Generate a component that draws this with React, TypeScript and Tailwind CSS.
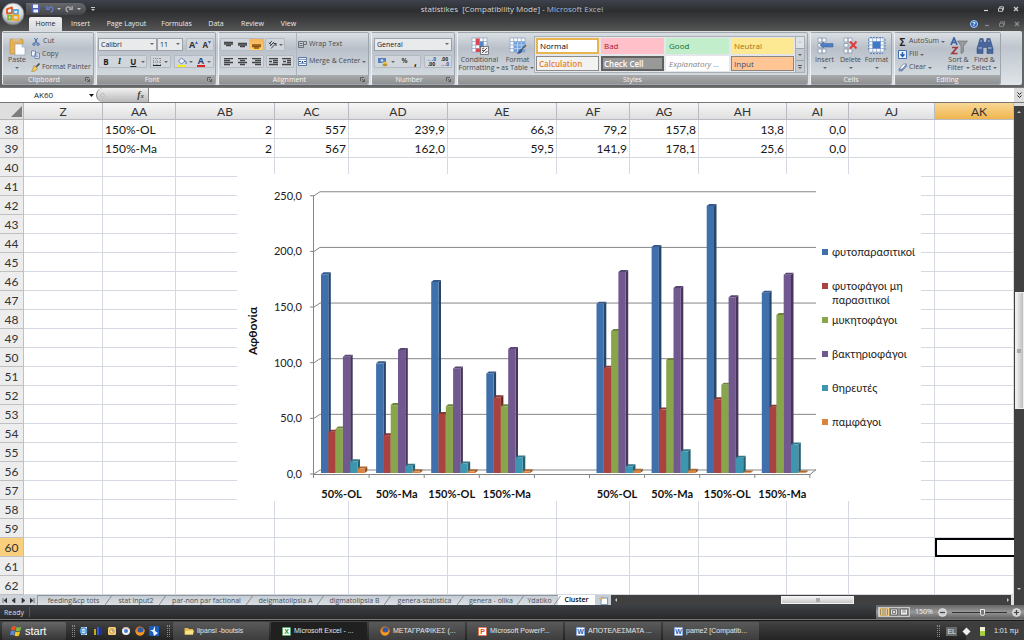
import type { ReactNode } from "react";
import clsx from "clsx";

/* ---------- data ---------- */

const columns = [
  { name: "Z", width: "w-[79px]" },
  { name: "AA", width: "w-[73px]" },
  { name: "AB", width: "w-[99px]" },
  { name: "AC", width: "w-[74px]" },
  { name: "AD", width: "w-[99px]" },
  { name: "AE", width: "w-[109px]" },
  { name: "AF", width: "w-[73px]" },
  { name: "AG", width: "w-[69px]" },
  { name: "AH", width: "w-[88px]" },
  { name: "AI", width: "w-[62px]" },
  { name: "AJ", width: "w-[86px]" },
  { name: "AK", width: "" },
];

const cells: Record<number, Record<string, string>> = {
  38: { AA: "150%-OL", AB: "2", AC: "557", AD: "239,9", AE: "66,3", AF: "79,2", AG: "157,8", AH: "13,8", AI: "0,0" },
  39: { AA: "150%-Ma", AB: "2", AC: "567", AD: "162,0", AE: "59,5", AF: "141,9", AG: "178,1", AH: "25,6", AI: "0,0" },
};

const rows = Array.from({ length: 25 }, (_, i) => 38 + i);

const series = [
  { front: "#4070ab", side: "#27466c", top: "#35598a", label: ["φυτοπαρασιτικοί"] },
  { front: "#aa4340", side: "#6d2927", top: "#873533", label: ["φυτοφάγοι μη", "παρασιτικοί"] },
  { front: "#88a54c", side: "#566a2e", top: "#6c843b", label: ["μυκητοφάγοι"] },
  { front: "#71588f", side: "#46365b", top: "#594572", label: ["βακτηριοφάγοι"] },
  { front: "#3d96af", side: "#255f70", top: "#30788c", label: ["θηρευτές"] },
  { front: "#db843d", side: "#8d5325", top: "#b0692f", label: ["παμφάγοι"] },
];

const groups = [
  { name: "50%-OL", values: [178.5, 37, 40, 104.5, 10.5, 4] },
  { name: "50%-Ma", values: [98.5, 34, 61, 110.5, 6.5, 1.5] },
  { name: "150%-OL", values: [171.5, 53, 60, 94, 8.5, 1.5] },
  { name: "150%-Ma", values: [89.5, 68, 60, 111.5, 14, 1.5] },
  { name: "", values: [] },
  { name: "50%-OL", values: [152, 94.5, 127.5, 180.5, 6, 2] },
  { name: "50%-Ma", values: [203, 57, 101.5, 166.3, 19.5, 2] },
  { name: "150%-OL", values: [239.9, 66.3, 79.2, 157.8, 13.8, 0.5] },
  { name: "150%-Ma", values: [162, 59.5, 141.9, 178.1, 25.6, 0.5] },
];

const sheets = [
  { name: "feeding&cp tots", width: "w-[71px]" },
  { name: "stat input2", width: "w-[54px]" },
  { name: "par-non par factional", width: "w-[87px]" },
  { name: "deigmatolipsia A", width: "w-[71px]" },
  { name: "digmatolipsia B", width: "w-[67px]" },
  { name: "genera-statistica", width: "w-[73px]" },
  { name: "genera - olika", width: "w-[60px]" },
  { name: "Ydatiko", width: "w-[37px]" },
];

/* ---------- small pieces ---------- */

function Caret({ light }: { light?: boolean }) {
  return (
    <svg className="h-[2px] w-[4px] shrink-0" viewBox="0 0 4 2">
      <path d="M0 0h4L2 2z" fill={light ? "#c8c8c8" : "#666"} />
    </svg>
  );
}

function Group({ title, width, launcher, children }: { title: string; width: string; launcher?: boolean; children: ReactNode }) {
  return (
    <section className={clsx("flex shrink-0 flex-col overflow-hidden rounded-[2px] border border-[#9fa5ac] border-l-[#eef1f3] bg-linear-to-b from-[#dadfe3] via-[#b9c0c9] via-30% to-[#dbe2e6]", width)}>
      <div className="flex h-[42px]">{children}</div>
      <h2 className="flex h-[9px] items-center bg-linear-to-b from-[#a9aaac] to-[#8f9092] text-[7px] leading-[9px] text-[#f6f6f6]">
        <span className="flex-1 text-center">{title}</span>
        {launcher && (
          <button aria-label={`${title} options`} className="mr-[3px]">
            <svg className="size-[5px]" viewBox="0 0 5 5" fill="none" stroke="#4e4e4e">
              <path d="M.5 4V.5H4M2 2l2.5 2.5M4.5 2v2.5H2" strokeWidth=".8" />
            </svg>
          </button>
        )}
      </h2>
    </section>
  );
}

function Box({ children, className }: { children: ReactNode; className?: string }) {
  return <div className={clsx("flex h-[13px] items-center justify-around rounded-[1px] border border-[#b3bac1] bg-[#d0d6dc]", className)}>{children}</div>;
}

function Pick({ label, value, width }: { label: string; value: string; width: string }) {
  return (
    <div className={clsx("relative h-[13px] border border-[#9ba2a9] bg-[#e8eaec]", width)}>
      <select aria-label={label} className="block h-full w-full appearance-none bg-transparent pl-[2px] text-[7px] leading-[11px] text-[#222] outline-none">
        <option>{value}</option>
      </select>
      <span className="pointer-events-none absolute top-[4px] right-[2px] flex"><Caret /></span>
    </div>
  );
}

function Lines({ rows, label, on }: { rows: number[][]; label: string; on?: boolean }) {
  return (
    <button aria-label={label} className={clsx("flex h-full w-[14px] items-center justify-center", on && "bg-linear-to-b from-[#f6b35b] to-[#ffd166]")}>
      <svg className="h-[8px] w-[9px]" viewBox="0 0 9 8" stroke={on ? "#8a5212" : "#444"}>
        {rows.map(([y, a, b], i) => (
          <path key={i} d={`M${a} ${y}H${b}`} strokeWidth="1.3" />
        ))}
      </svg>
    </button>
  );
}

function BigButton({ icon, lines, width, caret }: { icon: ReactNode; lines: string[]; width: string; caret?: boolean }) {
  return (
    <button className={clsx("flex shrink-0 flex-col items-center pt-[3px] text-[7px] leading-[8px] whitespace-nowrap text-[#4a4a4a]", width)}>
      <span className="flex h-[20px] items-center">{icon}</span>
      {lines.map((line, i) => (
        <span key={line} className="flex items-center gap-[2px]">
          {line}
          {!caret && i === lines.length - 1 && <Caret />}
        </span>
      ))}
      {caret && <span className="mt-[3px]"><Caret /></span>}
    </button>
  );
}

function TableIcon({ kind }: { kind: "cond" | "format" | "insert" | "delete" | "size" }) {
  const full = kind === "cond" || kind === "format" || kind === "size";
  return (
    <svg className="size-[18px]" viewBox="0 0 18 18">
      {full ? (
        <>
          <rect x="1" y="1" width="15" height="14" fill="#f7f9fc" stroke="#8aa0c0" strokeWidth=".7" />
          <path d="M1 4.500h15M1 8h15M1 11.500h15M4.700 1v14M8.500 1v14M12.300 1v14" stroke="#8aa0c0" strokeWidth=".7" />
        </>
      ) : (
        <path d="M2 1h4v4H2zM6 1h4v4H6zM2 6.500h4v3.500H2zM2 12h4v4H2zM6 12h4v4H6z" fill="#f7f9fc" stroke="#7d8fa9" strokeWidth=".7" />
      )}
      {kind === "cond" && (
        <>
          <path d="M5 1.500h3.500V8H5zM5 11.500h5V15H5z" fill="#dc4652" />
          <path d="M8.500 4.500h4V11h-4z" fill="#5284cc" />
          <rect x="9.500" y="9.500" width="8" height="8" fill="#eee" stroke="#555" strokeWidth=".7" />
          <path d="M11 12l2-1M11 13.500h3M14 15.500l2.500-1M11 16l5-5" stroke="#333" strokeWidth=".8" />
        </>
      )}
      {kind === "format" && (
        <>
          <path d="M5 4.800h11V15H5z" fill="#75a3de" />
          <path d="M5 8h11M5 11.500h11M8.500 5v10M12.300 5v10" stroke="#c9dcf3" strokeWidth=".7" />
          <path d="M17 8l-5 5" stroke="#61584f" strokeWidth="1.500" />
          <path d="M11.500 12l2 1.500c-1 3-3 3.500-6 3 2-1 2-3 4-4.500z" fill="#41597f" />
        </>
      )}
      {kind === "insert" && <path d="M4 8l3.500-3v1.500H17v3.500H7.500V11z" fill="#4f7ec4" stroke="#345d9c" strokeWidth=".5" />}
      {kind === "delete" && <path d="M8 4.500l6.500 7M14.500 4.500l-6.500 7" stroke="#df3d3b" strokeWidth="2" />}
      {kind === "size" && (
        <>
          <rect x="4.700" y="4.500" width="7.800" height="7" fill="#3f78c9" />
          <path d="M2 .5h13M2 16.500h13M.3 2v12M17 2v12" stroke="#5d86c0" strokeWidth="1" strokeDasharray="2 1" />
        </>
      )}
    </svg>
  );
}

/* ---------- window chrome ---------- */

function WindowButtons({ dim }: { dim?: boolean }) {
  return (
    <div className={clsx("flex gap-[9px]", dim ? "text-[#8b8b8b]" : "text-[#d0d0d0]")}>
      <button aria-label="Minimize">
        <svg className="size-[6px]" viewBox="0 0 6 6"><path d="M1 4.500h4" stroke="currentColor" strokeWidth="1.200" /></svg>
      </button>
      <button aria-label="Restore">
        <svg className="size-[6px]" viewBox="0 0 6 6" fill="none" stroke="currentColor"><path d="M1.700 2V.8H5.500v3H4.500M.5 2.300h4v3h-4z" strokeWidth=".9" /></svg>
      </button>
      <button aria-label="Close">
        <svg className="size-[6px]" viewBox="0 0 6 6" stroke="currentColor"><path d="M1 1l4 4M5 1L1 5" strokeWidth="1.300" /></svg>
      </button>
    </div>
  );
}

function TitleBar() {
  return (
    <header className="relative bg-linear-to-b from-[#3e424d] via-[#2d2e30] via-35% to-[#555555] font-['Open_Sans','Noto_Sans',sans-serif]">
      <button aria-label="Office Button" className="absolute top-[2px] left-[1px] z-10">
        <svg className="size-[24px]" viewBox="0 0 24 24">
          <defs>
            <radialGradient id="orb" cx=".5" cy=".3" r=".75">
              <stop offset="0" stopColor="#fff" />
              <stop offset=".6" stopColor="#d6d8db" />
              <stop offset="1" stopColor="#6e7378" />
            </radialGradient>
          </defs>
          <circle cx="12" cy="12" r="11" fill="url(#orb)" stroke="#6d7073" strokeWidth=".7" />
          <g fill="none" strokeWidth="1.900" strokeLinejoin="round">
            <path d="M6 7.200l5-1.800v5.500l-5 .7z" stroke="#e35b27" />
            <path d="M12.500 8h4.500v4h-4.500z" stroke="#5ea8d8" />
            <path d="M7 13.500h3.500v3.800H7z" stroke="#86b83c" />
            <path d="M12 13.300h5.500v4.500H12z" stroke="#f0aa26" />
          </g>
        </svg>
      </button>
      <div className="grid h-[17px] grid-cols-[1fr_auto_1fr] items-center">
        <div className="flex items-center gap-[5px]">
          <div className="ml-[26px] flex h-[12px] w-[60px] items-center gap-[4px] rounded-r-full bg-linear-to-b from-[#68696d] to-[#444548] pl-[5px]">
            <button aria-label="Save">
              <svg className="size-[9px]" viewBox="0 0 9 9">
                <path d="M.5.5h7l1 1v7h-8z" fill="#5262b8" />
                <path d="M2 .5h5v3.500H2zM2.500 5.500H7v3H2.500z" fill="#eef1fc" />
              </svg>
            </button>
            <button aria-label="Undo" className="ml-[2px] flex items-center gap-[3px]">
              <svg className="size-[8px]" viewBox="0 0 8 8" fill="none" stroke="#6278c0" strokeWidth="1.600"><path d="M2 3.500c2-2.500 5-1.500 5 .5S5.500 6.500 5 7.500" /><path d="M.8 1v3.200H4" /></svg>
              <Caret light />
            </button>
            <button aria-label="Redo" className="flex items-center gap-[4px]">
              <svg className="size-[8px]" viewBox="0 0 8 8" fill="none" stroke="#a3a5a9" strokeWidth="1.500"><path d="M6 3.500C4 1 1 2 1 4s1 2.500 2 3" /><path d="M7.200 1v3.200H4" /></svg>
              <Caret light />
            </button>
          </div>
          <button aria-label="Customize toolbar" className="border-t border-[#c8c8c8] pt-[1px]"><Caret light /></button>
        </div>
        <h1 className="text-[8px] whitespace-pre text-[#d6d6d6]">
          statistikes  [Compatibility Mode] - <span className="text-[#a6bdd8]">Microsoft Excel</span>
        </h1>
        <div className="flex justify-end pr-[5px]"><WindowButtons /></div>
      </div>
      <nav className="flex h-[14px] items-end pl-[29px] text-[7px] font-medium text-[#ececec]">
        <button className="h-[14px] w-[33px] rounded-t-[2px] bg-linear-to-b from-[#eeeeee] to-[#d5dade] text-[#222]">Home</button>
        <button className="h-[14px] w-[37px]">Insert</button>
        <button className="h-[14px] w-[55px]">Page Layout</button>
        <button className="h-[14px] w-[45px]">Formulas</button>
        <button className="h-[14px] w-[34px]">Data</button>
        <button className="h-[14px] w-[39px]">Review</button>
        <button className="h-[14px] w-[33px]">View</button>
        <div className="ml-auto flex items-center gap-[6px] self-center pr-[4px]">
          <button aria-label="Help" className="flex size-[8px] items-center justify-center rounded-full border border-[#a9cdf5] bg-[#2467be] text-[6px] leading-[6px] font-bold text-white">?</button>
          <WindowButtons dim />
        </div>
      </nav>
    </header>
  );
}

const smallButton = "flex h-[13px] items-center gap-[2px] whitespace-nowrap";

function Ribbon() {
  return (
    <div className="h-[56px] bg-[#626466] px-[2px] pb-[2px] font-['Open_Sans','Noto_Sans',sans-serif] text-[7px] text-[#4a4a4a]">
      <div className="flex h-full gap-[2px] overflow-hidden rounded-[2px] bg-linear-to-b from-[#dce0e4] via-[#bfc6ce] via-30% to-[#dfe5e8] pt-px">
        <Group title="Clipboard" width="w-[92px]" launcher>
          <BigButton
            width="w-[28px]"
            lines={["Paste"]}
            caret
            icon={
              <svg className="h-[19px] w-[17px]" viewBox="0 0 17 19">
                <rect x="1" y="2" width="13" height="15" rx="1" fill="#e6b155" stroke="#b98a3c" strokeWidth=".6" />
                <path d="M4 1h7v3H4z" fill="#c9c1ae" />
                <path d="M6 7h7l3 3v8H6z" fill="#fbfcfe" stroke="#8b97ad" strokeWidth=".6" />
                <path d="M13 7v3h3" fill="#d5dbea" stroke="#8b97ad" strokeWidth=".6" />
              </svg>
            }
          />
          <div className="flex flex-col pt-[2px]">
            <button className={smallButton}>
              <svg className="mx-[1px] size-[8px]" viewBox="0 0 8 8" fill="none" stroke="#4067ae"><path d="M5.500 0L3 5M2.500 0L5 5" /><circle cx="2" cy="6.200" r="1.200" /><circle cx="6" cy="6.200" r="1.200" /></svg>
              Cut
            </button>
            <button className={smallButton}>
              <svg className="size-[9px]" viewBox="0 0 9 9" fill="#f3f6fc" stroke="#5878b4" strokeWidth=".8"><path d="M.5 1h4v5h-4zM4 3h4.500v5.500H4z" /><path d="M5 5h2.500M5 6.700h2.500" /></svg>
              Copy
            </button>
            <button className={smallButton}>
              <svg className="size-[9px]" viewBox="0 0 9 9"><path d="M8.500.5L5 4" stroke="#454d5c" strokeWidth="1.600" /><path d="M3 2.500l3.500 3C5 8 3 8.500.5 8.500 2 7 2 4 3 2.500z" fill="#f0cd58" stroke="#96752a" strokeWidth=".5" /></svg>
              Format Painter
            </button>
          </div>
        </Group>

        <Group title="Font" width="w-[120px]" launcher>
          <div className="flex flex-1 flex-col gap-[4px] pt-[5px] pl-[1px]">
            <div className="flex">
              <Pick label="Font name" value="Calibri" width="w-[59px]" />
              <Pick label="Font size" value="11" width="w-[26px]" />
              <Box className="ml-[3px] w-[28px] font-['Open_Sans',sans-serif] font-bold text-[#333]">
                <button aria-label="Grow font" className="flex items-center text-[9px] leading-[11px]">A<svg className="mb-[5px] size-[3px]" viewBox="0 0 3 3"><path d="M0 3h3L1.500 0z" fill="#3465ad" /></svg></button>
                <button aria-label="Shrink font" className="flex items-center text-[8px] leading-[11px]">A<svg className="mb-[5px] size-[3px]" viewBox="0 0 3 3"><path d="M0 0h3L1.500 3z" fill="#3465ad" /></svg></button>
              </Box>
            </div>
            <div className="flex gap-[3px]">
              <Box className="w-[49px] text-[8px] leading-[10px] text-[#222]">
                <button className="w-[12px] font-bold">B</button>
                <button className="w-[12px] font-['Liberation_Serif',serif] font-bold italic">I</button>
                <button className="w-[12px] font-bold underline">U</button>
                <Caret />
              </Box>
              <Box className="w-[21px]">
                <button aria-label="Borders" className="flex items-center gap-[3px]">
                  <svg className="size-[8px]" viewBox="0 0 8 8" stroke="#888" fill="none"><path d="M.5 0v7M4 0v7M7.500 0v7M0 .5h8M0 4h8" strokeDasharray="1 1" /><path d="M0 7.500h8" stroke="#222" /></svg>
                  <Caret />
                </button>
              </Box>
              <Box className="w-[40px]">
                <button aria-label="Fill color" className="flex items-center gap-[2px]">
                  <svg className="size-[10px]" viewBox="0 0 10 10"><path d="M1.500 4l3-3 3.500 3-3.500 3z" fill="#edf2f9" stroke="#466caa" strokeWidth=".8" /><path d="M8 3.500c1 1 1.500 2 1 3.500" stroke="#4171be" fill="none" /><path d="M1 8h8v2H1z" fill="#f7ec12" /></svg>
                  <Caret />
                </button>
                <button aria-label="Font color" className="flex items-center gap-[2px]">
                  <span className="border-b-2 border-[#e3221d] px-[1px] text-[9px] leading-[8px] font-bold text-[#2d4379]">A</span>
                  <Caret />
                </button>
              </Box>
            </div>
          </div>
        </Group>

        <Group title="Alignment" width="w-[151px]" launcher>
          <div className="flex shrink-0 flex-col gap-[4px] border-r border-[#aeb4bb] pt-[5px] pr-[2px] pl-[1px]">
            <div className="flex gap-[1px]">
              <Box className="w-[44px]">
                <Lines label="Top align" rows={[[1.5, 0, 9], [3, 0, 9], [4.5, 2, 7]]} />
                <Lines label="Middle align" rows={[[2.5, 0, 9], [4, 0, 9], [5.5, 2, 7]]} />
                <Lines label="Bottom align" on rows={[[4, 0, 9], [5.5, 0, 9], [7, 2, 7]]} />
              </Box>
              <Box className="w-[20px]">
                <button aria-label="Orientation" className="flex items-center gap-[2px]">
                  <svg className="size-[9px]" viewBox="0 0 9 9" fill="none" stroke="#333"><path d="M1 4l3-3M2 6l4-4M1 2.500l3 3M3 8.500l5-5M8 6V3.500H5.500" strokeWidth=".9" /></svg>
                  <Caret />
                </button>
              </Box>
            </div>
            <div className="flex gap-[2px]">
              <Box className="w-[44px]">
                <Lines label="Align left" rows={[[0.5, 0, 9], [2.5, 0, 6], [4.5, 0, 9], [6.5, 0, 6]]} />
                <Lines label="Center" rows={[[0.5, 0, 9], [2.5, 2, 7], [4.5, 0, 9], [6.5, 2, 7]]} />
                <Lines label="Align right" rows={[[0.5, 0, 9], [2.5, 3, 9], [4.5, 0, 9], [6.5, 3, 9]]} />
              </Box>
              <Box className="w-[28px]">
                <Lines label="Decrease indent" rows={[[0.5, 0, 9], [2.5, 4, 9], [3.5, 0, 3], [4.5, 4, 9], [6.5, 0, 9]]} />
                <Lines label="Increase indent" rows={[[0.5, 0, 9], [2.5, 5, 9], [3.5, 1, 4], [4.5, 5, 9], [6.5, 0, 9]]} />
              </Box>
            </div>
          </div>
          <div className="flex flex-col gap-[4px] pt-[5px] pl-[1px]">
            <button className={smallButton}>
              <svg className="size-[9px]" viewBox="0 0 9 9" fill="none" stroke="#6b6f76"><path d="M.5 1.500h5v6h-5zM1.500 3.500h3M1.500 5.500h3M6 1.500h2.500v3H6" /></svg>
              Wrap Text
            </button>
            <button className={smallButton}>
              <svg className="size-[9px]" viewBox="0 0 9 9"><path d="M.5.5h8v8h-8z" fill="#eaf0f8" stroke="#5b77a4" /><path d="M.5 2.500h8v4h-8z" fill="#fff" stroke="#5b77a4" strokeWidth=".7" /><path d="M1 4.500h2M6 4.500h2M4 6l.5-2 .5 2" stroke="#224f94" fill="none" /></svg>
              Merge &amp; Center <Caret />
            </button>
          </div>
        </Group>

        <Group title="Number" width="w-[84px]" launcher>
          <div className="flex flex-col gap-[4px] pt-[5px] pl-[2px]">
            <Pick label="Number format" value="General" width="w-[78px]" />
            <div className="flex gap-[3px] text-[#222]">
              <Box className="w-[47px]">
                <button aria-label="Accounting format" className="flex items-center gap-[3px]">
                  <svg className="size-[10px]" viewBox="0 0 10 10"><path d="M0 1h8v5H0z" fill="#587fbd" /><circle cx="4" cy="3.500" r="1.300" fill="#cfe0f4" /><ellipse cx="7" cy="6" rx="2.500" ry="1.200" fill="#e9c350" /><ellipse cx="7" cy="8" rx="2.500" ry="1.200" fill="#b8902e" /></svg>
                  <Caret />
                </button>
                <button className="font-semibold">%</button>
                <button className="text-[10px] leading-[8px] font-bold">,</button>
              </Box>
              <Box className="w-[28px]">
                <button aria-label="Increase decimal" className="flex flex-col text-[5px] leading-[5px] font-bold"><span className="text-[#2d5ba7]">←.0</span><span>.00</span></button>
                <button aria-label="Decrease decimal" className="flex flex-col text-[5px] leading-[5px] font-bold"><span>.00</span><span className="text-[#2d5ba7]">→.0</span></button>
              </Box>
            </div>
          </div>
        </Group>

        <Group title="Styles" width="w-[351px]">
          <BigButton width="w-[43px]" icon={<TableIcon kind="cond" />} lines={["Conditional", "Formatting"]} />
          <BigButton width="w-[33px]" icon={<TableIcon kind="format" />} lines={["Format", "as Table"]} />
          <div className="mt-[3px] flex h-[37px] border border-[#aab0b7] bg-[#e4e7ea] text-[8px]">
            <div className="grid grid-cols-4 gap-x-[2px] gap-y-[2px] p-[1px]">
              <button className="h-[16px] w-[63px] border-2 border-[#e9b552] bg-white pl-[2px] text-left leading-[12px] text-black">Normal</button>
              <button className="h-[16px] w-[63px] bg-[#ffc0c9] pl-[3px] text-left text-[#a8182f]">Bad</button>
              <button className="h-[16px] w-[63px] bg-[#c3eecb] pl-[3px] text-left text-[#176a28]">Good</button>
              <button className="h-[16px] w-[63px] bg-[#fde993] pl-[3px] text-left text-[#a07012]">Neutral</button>
              <button className="h-[15px] w-[63px] border border-[#8b8b8b] bg-[#f2f2f2] pl-[2px] text-left leading-[12px] font-semibold text-[#e67e29]">Calculation</button>
              <button className="h-[15px] w-[63px] border-2 border-[#606060] bg-[#999] pl-[1px] text-left leading-[10px] font-semibold text-white">Check Cell</button>
              <button className="h-[15px] w-[63px] bg-white pl-[3px] text-left text-[#858585] italic">Explanatory ...</button>
              <button className="h-[15px] w-[63px] border border-[#8a8580] bg-[#ffc595] pl-[2px] text-left leading-[12px] text-[#4a4a72]">Input</button>
            </div>
            <div className="flex w-[9px] flex-col border-l border-[#aab0b7] bg-[#c5cbd1]">
              <button aria-label="Scroll styles up" className="flex flex-1 rotate-180 items-center justify-center bg-[#dfe2e6]"><Caret light /></button>
              <button aria-label="Scroll styles down" className="flex flex-1 items-center justify-center border-y border-[#9da3aa]"><Caret /></button>
              <button aria-label="More styles" className="flex flex-1 items-center justify-center"><span className="border-t border-[#555] pt-[1px]"><Caret /></span></button>
            </div>
          </div>
        </Group>

        <Group title="Cells" width="w-[82px]">
          <BigButton width="w-[27px]" caret icon={<TableIcon kind="insert" />} lines={["Insert"]} />
          <BigButton width="w-[25px]" caret icon={<TableIcon kind="delete" />} lines={["Delete"]} />
          <BigButton width="w-[27px]" caret icon={<TableIcon kind="size" />} lines={["Format"]} />
        </Group>

        <Group title="Editing" width="w-[107px]">
          <div className="flex w-[50px] shrink-0 flex-col pt-[2px] pl-[3px]">
            <button className={smallButton}><span className="w-[9px] text-[10px] leading-[10px] font-bold text-[#222]">Σ</span>AutoSum <Caret /></button>
            <button className={smallButton}>
              <svg className="size-[9px]" viewBox="0 0 9 9"><path d="M.5.5h8v8h-8z" fill="#eaf2fc" stroke="#4372b4" /><path d="M4.500 2v4M2.500 4.300l2 2.200 2-2.200" fill="none" stroke="#285da9" strokeWidth="1.400" /></svg>
              Fill <Caret />
            </button>
            <button className={smallButton}>
              <svg className="size-[9px]" viewBox="0 0 9 9"><path d="M1 6l4.500-5h3L4 6.500z" fill="#fff" stroke="#5f779e" strokeWidth=".7" /><path d="M1 6h3v2H1zM4 6.500l4.500-5v2L4 8z" fill="#8ba4cd" stroke="#5f779e" strokeWidth=".6" /></svg>
              Clear <Caret />
            </button>
          </div>
          <BigButton
            width="w-[27px]"
            lines={["Sort &", "Filter"]}
            icon={
              <svg className="size-[18px]" viewBox="0 0 18 18">
                <path d="M1 8L4 1l3 7M2.200 5.500h3.800" fill="none" stroke="#3a62a5" strokeWidth="1.700" />
                <path d="M2 10.500h5L2 16.500h5.500" fill="none" stroke="#a23a42" strokeWidth="1.700" />
                <path d="M7.500 4h10l-4 5v6l-2.500 1.500V9z" fill="#9a9a9a" stroke="#6c6c6c" strokeWidth=".6" />
              </svg>
            }
          />
          <BigButton
            width="w-[25px]"
            lines={["Find &", "Select"]}
            icon={
              <svg className="size-[18px]" viewBox="0 0 18 18" fill="#48669c" stroke="#2e4775" strokeWidth=".5">
                <path d="M4 1.500h3l1 4h2l1-4h3l3 10v5h-6v-6H7v6H1v-5z" />
                <path d="M2.500 11h3.500M12 11h3.500M4.500 4H6M12 4h1.500" stroke="#b8cbe9" strokeWidth="1.200" />
              </svg>
            }
          />
        </Group>
      </div>
    </div>
  );
}

function FormulaBar() {
  return (
    <div className="flex h-[16px] items-stretch border-y border-[#777] bg-white font-['Open_Sans','Noto_Sans',sans-serif]">
      <input aria-label="Name box" defaultValue="AK60" className="w-[87px] text-center text-[8px] text-[#222] outline-none" />
      <button aria-label="Name list" className="flex w-[9px] items-center justify-center">
        <svg className="h-[3px] w-[5px]" viewBox="0 0 5 3"><path d="M0 0h5L2.500 3z" fill="#111" /></svg>
      </button>
      <div className="flex w-[52px] items-center justify-between rounded-l-full border-l border-[#888] bg-linear-to-b from-[#f2f2f2] to-[#b9b9b9] pr-[4px] pl-[3px]">
        <span className="size-[5px] rounded-full border border-[#bbb]" />
        <button aria-label="Insert function" className="flex items-center font-['Liberation_Serif',serif] text-[10px] leading-[10px] font-bold text-[#444] italic">f<span className="mt-[2px] text-[7px]">x</span></button>
      </div>
      <input aria-label="Formula" className="min-w-0 flex-1 border-l border-[#888] px-[2px] text-[8px] outline-none" />
      <button aria-label="Expand formula bar" className="flex w-[10px] items-center justify-center bg-[#dcdcdc]">
        <svg className="h-[6px] w-[5px]" viewBox="0 0 5 6" fill="none" stroke="#222"><path d="M.5.5l2 2 2-2M.5 3.500l2 2 2-2" /></svg>
      </button>
    </div>
  );
}

/* ---------- chart ---------- */

const scale = 1.113;
const left = 77;
const step = 55.1;
const base = 299;

function Chart() {
  return (
    <svg
      className="absolute top-[71px] left-[237px] h-[327px] w-[684px] bg-white font-['Lato','Noto_Sans',sans-serif]"
      viewBox="0 0 684 327"
      role="img"
      aria-label="Αφθονία"
    >
      <g stroke="#868686" fill="none">
        {[0, 50, 100, 150, 200, 250].map((v) => (
          <path key={v} d={`M${left - 4} ${base + 1 - v * scale}H${left}l6 -4H579`} />
        ))}
        <path d={`M${left - 0.5} 21.500V${base + 5}`} />
        <path d={`M${left} ${base + 1.5}H573l6 -5`} />
        {groups.map((_, i) => (
          <path key={i} d={`M${left + (i + 1) * step} ${base + 1}v4`} />
        ))}
      </g>
      <g className="text-[11px]" fill="#222" textAnchor="end">
        {[0, 50, 100, 150, 200, 250].map((v) => (
          <text key={v} x="65" y={base + 5 - v * scale}>{`${v},0`}</text>
        ))}
      </g>
      {groups.map((group, g) =>
        group.values.map((v, i) => {
          const x = left + g * step + 7 + i * 7.3;
          const y = base - v * scale;
          return (
            <g key={`${g}-${i}`}>
              <path d={`M${x} ${y}l2.500 -2h7.300l-2.500 2z`} fill={series[i].top} />
              <path d={`M${x + 7.3} ${y}l2.500 -2V${base - 2}l-2.500 2z`} fill={series[i].side} />
              <path d={`M${x} ${y}h7.300V${base}h-7.300z`} fill={series[i].front} />
            </g>
          );
        }),
      )}
      <g className="text-[11px] font-bold" fill="#111" textAnchor="middle">
        {groups.map((group, g) => (
          <text key={g} x={left + (g + 0.5) * step} y="324">{group.name}</text>
        ))}
      </g>
      <text className="text-[12px] font-bold" fill="#111" textAnchor="middle" transform="translate(20 157) rotate(-90)">Αφθονία</text>
      {series.map((s, i) => (
        <g key={i} className="text-[11px]" fill="#222">
          <rect x="585" y={75 + i * 34} width="6" height="6" fill={s.front} />
          {s.label.map((line, j) => (
            <text key={line} x="595" y={82 + i * 34 + j * 14}>{line}</text>
          ))}
        </g>
      ))}
    </svg>
  );
}

/* ---------- sheet ---------- */

function Sheet() {
  return (
    <main className="flex">
      <div className="relative min-w-0 flex-1 overflow-hidden bg-white">
        <table className="w-full table-fixed border-separate border-spacing-0 font-['Lato','Noto_Sans',sans-serif] text-[12px] text-[#161616]">
          <thead>
            <tr className="h-[17px]">
              <th className="w-[24px] border-r border-b border-[#b4b4b4] bg-[#dedede] p-0">
                <svg className="ml-auto size-[13px]" viewBox="0 0 13 13"><path d="M12 1v11H1z" fill="#7d7d7d" /></svg>
              </th>
              {columns.map((c) => (
                <th
                  key={c.name}
                  className={clsx(
                    "border-r border-b border-[#b8bcc2] p-0 pt-[2px] leading-[14px] font-normal text-[#333]",
                    c.width,
                    c.name === "AK" ? "bg-linear-to-b from-[#f8d794] to-[#f0b64c] pl-[10px]" : "bg-linear-to-b from-[#f6f6f6] to-[#dfdfdf]",
                  )}
                >
                  {c.name}
                </th>
              ))}
            </tr>
          </thead>
          <tbody>
            {rows.map((r) => (
              <tr key={r} className="h-[19px]">
                <th className={clsx("border-r border-b border-[#c0c0c0] p-0 pt-[2px] leading-[16px] font-normal text-[#333]", r === 60 ? "bg-[#f9ce7c]" : "bg-[#ededed]")}>{r}</th>
                {columns.map((c) => (
                  <td
                    key={c.name}
                    className={clsx(
                      "px-[2px] pt-[2px] pb-0 leading-[16px]",
                      c.name === "AA" ? "text-left" : "text-right",
                      r === 60 && c.name === "AK" ? "border-2 border-r-0 border-black" : "border-r border-b border-[#d4d9e2]",
                    )}
                  >
                    {cells[r]?.[c.name]}
                  </td>
                ))}
              </tr>
            ))}
          </tbody>
        </table>
        <Chart />
      </div>
      <div className="flex w-[10px] flex-col items-center bg-[#404040]">
        <div className="h-[3px] w-full bg-[#ddd]" />
        <button aria-label="Scroll up" className="flex h-[13px] rotate-180 items-center"><Caret light /></button>
        <div className="h-[173px]" />
        <div className="flex h-[117px] w-[9px] items-center justify-center border border-[#eee] bg-linear-to-r from-[#f2f2f2] to-[#bdbdbd]">
          <span className="size-[4px] bg-[#aaa]" />
        </div>
        <button aria-label="Scroll down" className="mt-auto flex h-[13px] items-center"><Caret light /></button>
      </div>
    </main>
  );
}

function SheetTabs() {
  return (
    <div className="flex h-[10px] bg-[#404040] font-['Open_Sans','Noto_Sans',sans-serif] text-[7px] leading-[10px] text-[#4a4f55]">
      <div className="flex w-[38px] items-center justify-around border-r border-[#999] bg-[#cdd3d9]">
        {["M1 0v5M5 0L2 2.500l3 2.500z", "M4 0L1 2.500l3 2.500z", "M1 0l3 2.500L1 5z", "M0 0l3 2.500L0 5zM4 0v5"].map((d, i) => (
          <button key={d} aria-label={["First sheet", "Previous sheet", "Next sheet", "Last sheet"][i]}>
            <svg className="size-[5px]" viewBox="0 0 5 5" fill="#333" stroke="#333" strokeWidth=".6"><path d={d} /></svg>
          </button>
        ))}
      </div>
      {sheets.map((s) => (
        <button key={s.name} className={clsx("relative border-t border-[#8e959c] bg-linear-to-b from-[#c6cdd4] to-[#dbe0e5] leading-[9px] whitespace-nowrap", s.width)}>
          {s.name}
          <svg className="absolute top-0 -right-[3px] z-10 h-[9px] w-[7px]" viewBox="0 0 7 9"><path d="M6.500 0L0 9" stroke="#737a82" strokeWidth=".8" /></svg>
        </button>
      ))}
      <button className="w-[37px] bg-white font-semibold text-black">Cluster</button>
      <button aria-label="Insert worksheet" className="flex w-[16px] items-center justify-center bg-[#c6cdd4]">
        <svg className="size-[9px]" viewBox="0 0 9 9"><path d="M2 2h6.500v6.500H2z" fill="#fff" stroke="#6884b0" strokeWidth=".8" /><path d="M2.500 0v5M0 2.500h5" stroke="#f1b243" strokeWidth="1.200" /></svg>
      </button>
      <button aria-label="Scroll left" className="flex w-[10px] items-center justify-center">
        <svg className="size-[4px]" viewBox="0 0 4 4"><path d="M3 0v4L1 2z" fill="#ccc" /></svg>
      </button>
      <div className="flex flex-1 justify-end pt-px">
        <div className="mr-[150px] flex h-[8px] w-[73px] items-center justify-center border border-[#f4f4f4] bg-linear-to-b from-[#f2f2f2] to-[#c6c6c6]">
          <span className="size-[4px] bg-[#aaa]" />
        </div>
      </div>
      <button aria-label="Scroll right" className="flex w-[7px] items-center justify-center">
        <svg className="size-[4px]" viewBox="0 0 4 4"><path d="M1 0v4l2-2z" fill="#ccc" /></svg>
      </button>
      <div className="mr-[10px] w-[3px] bg-[#e2e2e2]" />
    </div>
  );
}

function StatusBar() {
  return (
    <div className="flex h-[15px] items-stretch justify-between border-b border-[#777] bg-linear-to-b from-[#3d4045] to-[#292929] font-['Open_Sans','Noto_Sans',sans-serif] text-[7px] text-[#dcdcdc]">
      <span className="my-[2px] w-[30px] border-r border-[#555] pl-[4px] leading-[11px]">Ready</span>
      <div className="flex w-[148px] items-center gap-[5px] bg-linear-to-b from-[#666] via-[#999] to-[#606060] pl-[2px]">
        <div className="flex h-[10px] border border-[#c8c8c8] bg-[#909090]">
          <button aria-label="Normal view" className="bg-[#f5cf80] px-[1px]"><svg className="size-[8px]" viewBox="0 0 8 8" fill="#fff" stroke="#8d6b2b" strokeWidth=".7"><path d="M.5 1h7v6h-7zM.5 3h7M.5 5h7M3 1v6M5 1v6" /></svg></button>
          <button aria-label="Page layout view" className="px-[1px]"><svg className="size-[8px]" viewBox="0 0 8 8" fill="#ddd" stroke="#555" strokeWidth=".7"><path d="M.5 1h7v6h-7zM2.500 2.500h3v3h-3z" /></svg></button>
          <button aria-label="Page break view" className="px-[1px]"><svg className="size-[8px]" viewBox="0 0 8 8" fill="#eee" stroke="#555" strokeWidth=".7"><path d="M.5 1h7v6h-7zM3 1v4M5 1v4" /></svg></button>
        </div>
        <button className="text-[#f2f2f2]">150%</button>
        <button aria-label="Zoom out"><svg className="size-[9px]" viewBox="0 0 9 9"><circle cx="4.500" cy="4.500" r="4" fill="#cfcfcf" stroke="#eee" strokeWidth=".6" /><path d="M2 4.500h5" stroke="#444" strokeWidth="1.200" /></svg></button>
        <input
          type="range"
          aria-label="Zoom"
          min="0"
          max="100"
          defaultValue="57"
          className="h-[9px] min-w-0 flex-1 appearance-none bg-linear-to-b from-transparent from-45% via-[#333] via-50% to-transparent to-60% [&::-webkit-slider-thumb]:h-[7px] [&::-webkit-slider-thumb]:w-[5px] [&::-webkit-slider-thumb]:appearance-none [&::-webkit-slider-thumb]:rounded-b-full [&::-webkit-slider-thumb]:border [&::-webkit-slider-thumb]:border-[#eee] [&::-webkit-slider-thumb]:bg-[#777]"
        />
        <button aria-label="Zoom in" className="mr-[3px]"><svg className="size-[9px]" viewBox="0 0 9 9"><circle cx="4.500" cy="4.500" r="4" fill="#cfcfcf" stroke="#eee" strokeWidth=".6" /><path d="M2 4.500h5M4.500 2v5" stroke="#444" strokeWidth="1.200" /></svg></button>
      </div>
    </div>
  );
}

/* ---------- taskbar ---------- */

function DocIcon({ letter, color }: { letter: string; color: string }) {
  return <span className={clsx("flex size-[9px] items-center justify-center rounded-[1px] border bg-white text-[7px] leading-[7px] font-bold", color)}>{letter}</span>;
}

function FirefoxIcon() {
  return (
    <svg className="size-[10px] shrink-0" viewBox="0 0 10 10">
      <circle cx="5" cy="5" r="4.500" fill="#ec7a1c" />
      <circle cx="5.500" cy="4" r="2.800" fill="#2e5aa8" />
      <path d="M.5 3C1 6 3 7 5 6.500 7.500 7 9 5 9.500 3c.5 4-1.500 6.500-4.500 6.500S0 7 .5 3z" fill="#f39a22" />
    </svg>
  );
}

const tasks = [
  {
    name: "lipansi -boutsis",
    icon: <svg className="h-[8px] w-[10px]" viewBox="0 0 10 8"><path d="M.5 1h3.500l1 1h4v5.500H.5z" fill="#e4b846" /><path d="M1 7.500L2 3.500h8L9 7.500z" fill="#fbe38b" /></svg>,
  },
  { name: "Microsoft Excel - ...", icon: <DocIcon letter="X" color="border-[#5ba368] text-[#2c8440]" />, active: true },
  { name: "ΜΕΤΑΓΡΑΦΙΚΕΣ (...", icon: <FirefoxIcon /> },
  { name: "Microsoft PowerP...", icon: <DocIcon letter="P" color="border-[#e07458] text-[#d24a28]" /> },
  { name: "ΑΠΟΤΕΛΕΣΜΑΤΑ ...", icon: <DocIcon letter="W" color="border-[#86a7dd] text-[#2a5cae]" /> },
  { name: "pame2 [Compatib...", icon: <DocIcon letter="W" color="border-[#86a7dd] text-[#2a5cae]" /> },
];

function Grip() {
  return <span className="h-[12px] w-[3px] border-x border-dotted border-[#888]" />;
}

function Taskbar() {
  return (
    <footer className="flex h-[20px] items-center border-t border-[#161616] bg-linear-to-b from-[#444] to-[#232323] pt-px pl-[2px] font-['Liberation_Sans','Noto_Sans',sans-serif] text-[7px] text-[#e6e6e6]">
      <button className="flex h-[18px] w-[64px] items-center gap-[3px] rounded-[2px] bg-linear-to-b from-[#676767] to-[#363636] pl-[8px] text-[11px] text-white">
        <svg className="size-[12px]" viewBox="0 0 12 12">
          <path d="M2 1.500c1.500-.8 2.700-.6 4 0L5 5.500c-1.300-.6-2.500-.8-4 0z" fill="#e8552b" />
          <path d="M6.700 1.800c1.500.8 3 .8 4.500 0l-1 4c-1.500.8-3 .8-4.500 0z" fill="#7cbb3f" />
          <path d="M.9 6.300c1.500-.8 2.700-.6 4 0l-1 4c-1.300-.6-2.500-.8-4 0z" fill="#4e8fe0" />
          <path d="M5.500 6.600c1.500.8 3 .8 4.500 0l-1 4c-1.500.8-3 .8-4.500 0z" fill="#f7c928" />
        </svg>
        start
      </button>
      <div className="ml-[6px] flex items-center gap-[4px]">
        <Grip />
        <a href="#ie" aria-label="Internet Explorer"><svg className="size-[10px]" viewBox="0 0 10 10"><path d="M2 1h6v8H2z" fill="#dcebf9" /><circle cx="4.500" cy="5" r="3" fill="none" stroke="#4b93d3" strokeWidth="1.500" /><path d="M2 5h5" stroke="#4b93d3" /></svg></a>
        <a href="#player" aria-label="Player"><svg className="size-[10px]" viewBox="0 0 10 10"><path d="M2 3v6" stroke="#c7a72d" strokeWidth="2" /><path d="M5 1v8" stroke="#355acd" strokeWidth="2" /><path d="M8 2v7" stroke="#2131a0" strokeWidth="2" /></svg></a>
        <a href="#mail" aria-label="Outlook"><svg className="size-[10px]" viewBox="0 0 10 10"><rect x="1" y="1" width="8" height="8" rx="1.500" fill="#f4d27a" /><circle cx="5" cy="5" r="2.300" fill="#fff6d8" stroke="#c78c26" /><path d="M5 3.500V5h1.500" stroke="#444" fill="none" strokeWidth=".7" /></svg></a>
        <a href="#browser" aria-label="Browser"><svg className="size-[10px]" viewBox="0 0 10 10"><circle cx="5" cy="5" r="3" fill="#4480c9" stroke="#f2f2f2" strokeWidth="2" /><path d="M2 3a4 4 0 016 0" stroke="#d4564a" fill="none" strokeWidth=".6" /></svg></a>
        <a href="#firefox" aria-label="Firefox"><FirefoxIcon /></a>
        <a href="#messenger" aria-label="Messenger"><svg className="size-[10px]" viewBox="0 0 10 10"><rect width="10" height="10" rx="1" fill="#1d5cb8" /><path d="M6 0L4 4H1l3 2 1 4 4-3-3-2z" fill="#eaf3ff" /></svg></a>
        <span className="ml-[4px] flex"><Grip /></span>
      </div>
      <div className="ml-[3px] flex h-[18px] gap-[2px]">
        {tasks.map((t) => (
          <button
            key={t.name}
            className={clsx(
              "flex w-[96px] items-center gap-[3px] rounded-[1px] pl-[11px] whitespace-nowrap",
              t.active ? "bg-[#202020]" : "bg-linear-to-b from-[#5a5a5a] to-[#3d3d3d]",
            )}
          >
            {t.icon}
            {t.name}
          </button>
        ))}
      </div>
      <div className="ml-auto flex h-full items-center">
        <Grip />
        <button className="ml-[6px] bg-[#6a6a6a] px-[1px] leading-[9px]">EL</button>
        <div className="ml-[9px] flex h-full w-[58px] items-center gap-[9px] bg-[#3d3d3d]">
          <button aria-label="Show hidden icons" className="-ml-[4px]"><svg className="size-[9px]" viewBox="0 0 9 9"><path d="M4.500.5l4 4-4 4-4-4z" fill="#eee" /></svg></button>
          <svg className="h-[10px] w-[5px]" viewBox="0 0 5 10"><path d="M0 1h5v8.500H0z" fill="#f2f2d8" /><path d="M0 5h5v4.500H0z" fill="#a3d23b" /></svg>
          <time className="whitespace-nowrap">1:01 πμ</time>
        </div>
      </div>
    </footer>
  );
}

export default function App() {
  return (
    <div className="flex flex-col overflow-hidden bg-[#333]">
      <TitleBar />
      <Ribbon />
      <FormulaBar />
      <Sheet />
      <SheetTabs />
      <StatusBar />
      <Taskbar />
    </div>
  );
}
